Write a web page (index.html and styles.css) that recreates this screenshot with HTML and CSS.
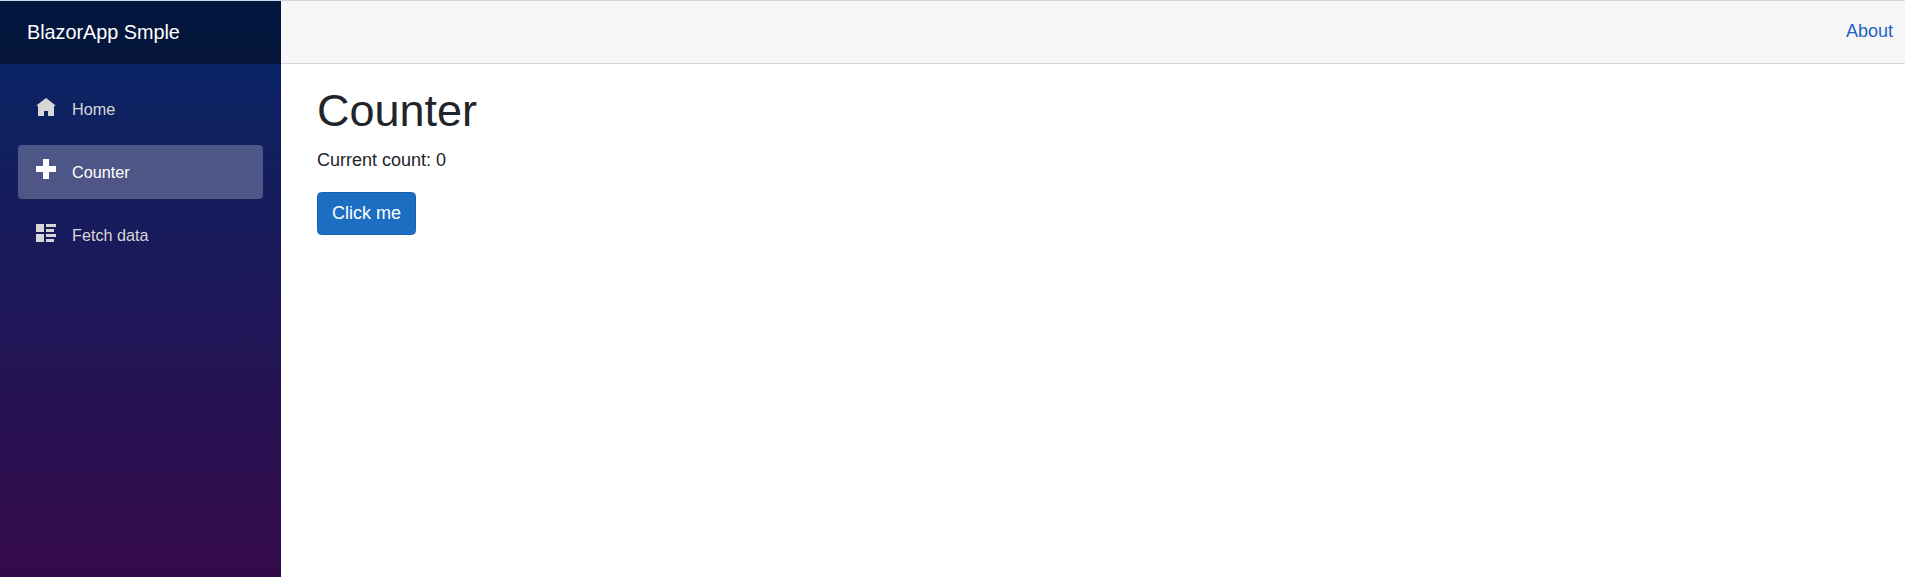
FILE: index.html
```html
<!DOCTYPE html>
<html lang="en">
<head>
<meta charset="utf-8">
<title>Counter</title>
<link rel="stylesheet" href="styles.css">
</head>
<body>
<div class="page">
  <aside class="sidebar">
    <div class="brand-row"><a class="brand">BlazorApp Smple</a></div>
    <nav class="nav">
      <a class="nav-link"><svg class="icon" viewBox="0 0 20 20"><path d="M10 0L0 7.7h2V18h6v-5h4v5h6V7.7h2z"/></svg><span>Home</span></a>
      <a class="nav-link active"><svg class="icon icon-plus" viewBox="0 0 20 20"><path d="M7 0v7h-7v6h7v7h6v-7h7v-6h-7v-7z"/></svg><span>Counter</span></a>
      <a class="nav-link"><svg class="icon" viewBox="0 0 20 20" shape-rendering="crispEdges"><path d="M0 0h8v8h-8zM10 0h10v3h-10zM10 5h8v3h-8zM0 10h8v8h-8zM10 10h10v3h-10zM10 15h8v3h-8z"/></svg><span>Fetch data</span></a>
    </nav>
  </aside>
  <main class="main">
    <div class="top-row"><a class="about">About</a></div>
    <div class="content">
      <h1 class="title">Counter</h1>
      <p class="count">Current count: 0</p>
      <button class="btn">Click me</button>
    </div>
  </main>
</div>
</body>
</html>
```
FILE: styles.css
```css
* { box-sizing: border-box; }
html { font-size: 18px; }
body {
  margin: 0;
  font-family: "Liberation Sans", Arial, sans-serif;
  line-height: 1.5;
  color: #212529;
  background: #fff;
}
.page { display: flex; height: 577px; overflow: hidden; }
.sidebar {
  width: 281px;
  flex: none;
  border-top: 1px solid #c4d8ee;
  background: linear-gradient(180deg, #052767 0, #3a0647 640px);
}
.brand-row {
  display: flex;
  align-items: center;
  height: 63px;
  padding-left: 27px;
  background: rgba(0, 0, 0, .4);
}
.brand { font-size: 19.8px; color: #fff; }
.nav { display: flex; flex-direction: column; gap: 9px; padding: 18px 18px 0; }
.nav-link {
  display: flex;
  align-items: center;
  height: 54px;
  padding-left: 18px;
  border-radius: 4px;
  font-size: 16.2px;
  color: #d7d7d7;
}
.nav-link.active { color: #fff; background: rgba(255, 255, 255, .25); }
.icon {
  width: 20px;
  height: 20px;
  margin: 0 16px 2px 0;
  fill: currentColor;
}
.icon-plus { margin-bottom: 6px; }
.main { flex: 1; border-top: 1px solid #d6d5d5; }
.top-row {
  display: flex;
  align-items: center;
  justify-content: flex-end;
  height: 63px;
  padding: 0 12px 2px 0;
  background: #f7f7f7;
  border-bottom: 1px solid #d6d5d5;
}
.about { color: #1b62c4; }
.content { padding: 20px 36px 0; }
.title { margin: 0 0 9px; font-size: 45px; font-weight: 500; line-height: 54px; }
.count { margin: 0 0 18px; }
.btn {
  height: 43px;
  padding: 0 14px;
  border: 1px solid #1861ac;
  border-radius: 4.5px;
  background: #1b6ec2;
  color: #fff;
  font: inherit;
}
```
